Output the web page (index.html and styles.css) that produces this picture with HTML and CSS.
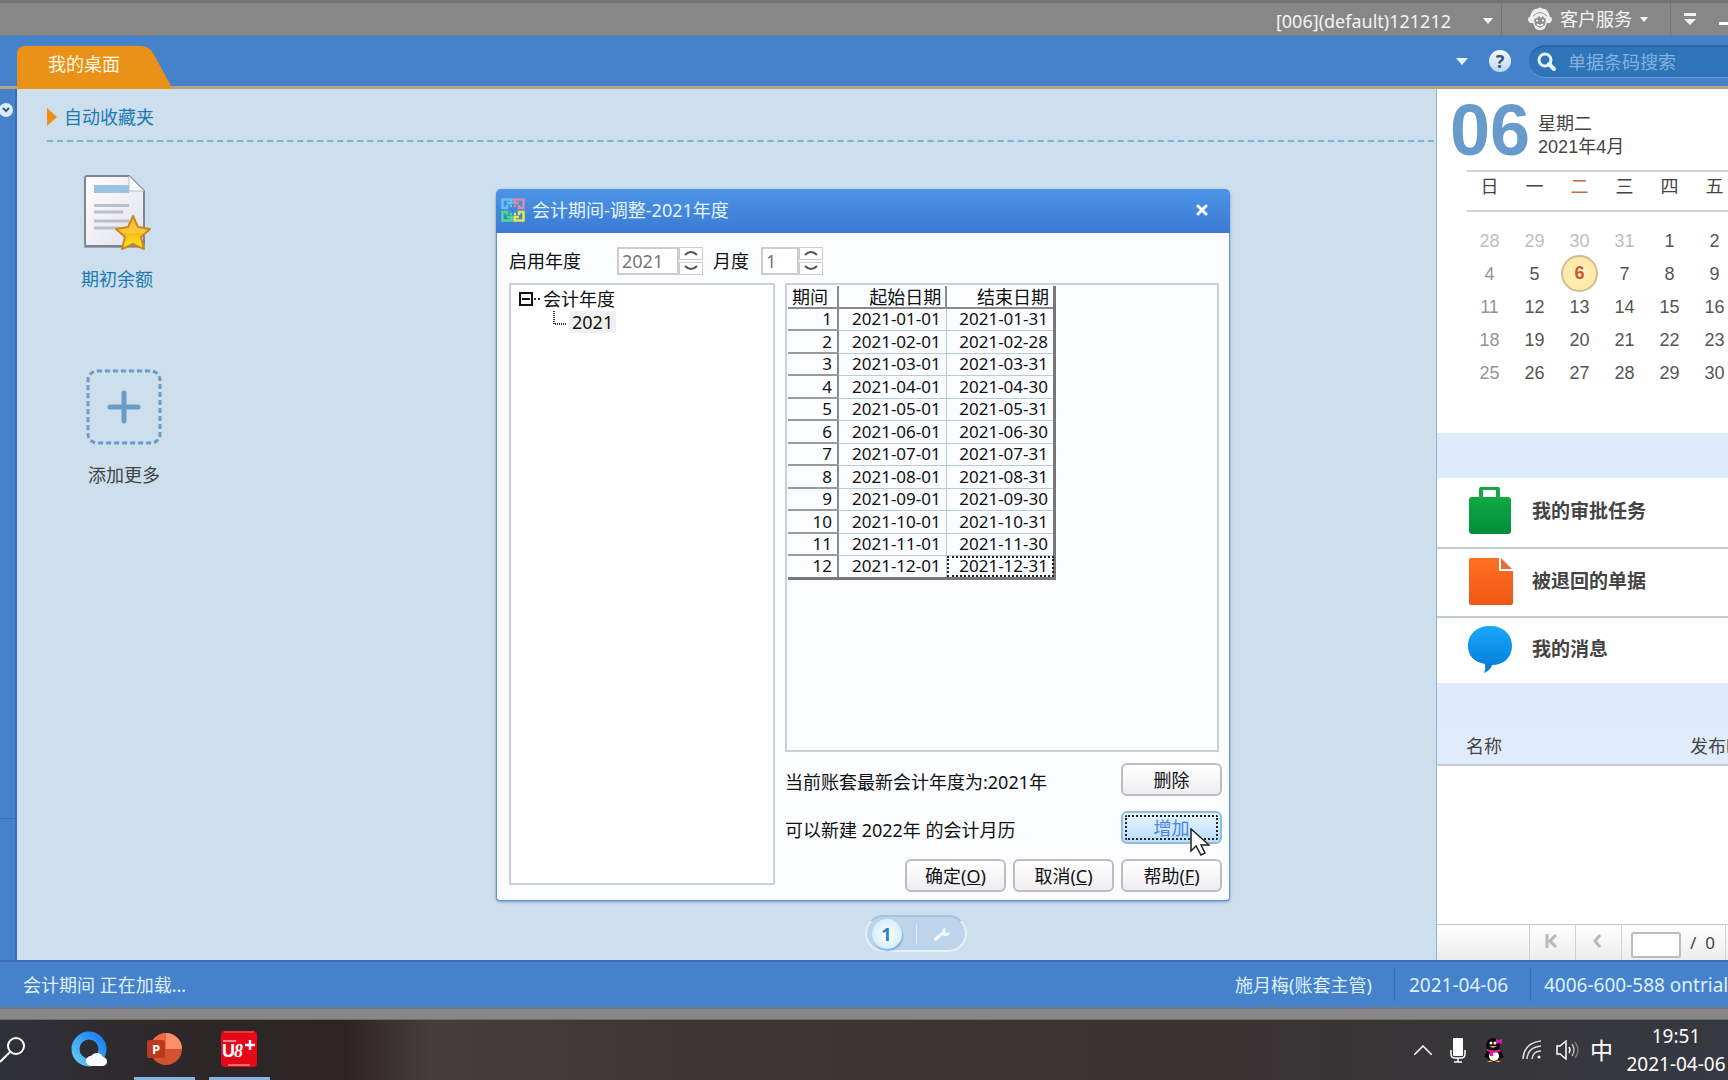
FILE: index.html
```html
<!DOCTYPE html>
<html lang="zh-CN">
<head>
<meta charset="utf-8">
<title>会计期间-调整</title>
<link rel="stylesheet" href="styles.css">
</head>
<body>
<div class="app">
  <header class="topbar">
    <button class="top-account">[006](default)121212 <svg width="10" height="6" viewBox="0 0 10 6"><path d="M0 0h10L5 6z" fill="#fff"/></svg></button>
    <button class="top-service">
      <svg width="24" height="24" viewBox="0 0 24 24"><path d="M2 16a4 4 0 0 1-1-6h1C3 4 7 1 9 2c2-2 4-2 6 0 3-1 6 3 7 8h1a4 4 0 0 1-1 6l-3 0-2 5c-3 3-7 3-10 0l-2-5z" fill="#ededed"/><path d="M6 12q3 0 5-3l2 2 2-2q1 3 3 3l-1 6-5 3-5-3z" fill="#909090"/><path d="M5 9q7-7 14 0" stroke="#9a9a9a" fill="none"/><path d="M8 13.500h2M14 13.500h2M9 17q3 3 6 0" stroke="#fff" stroke-width="1.500" fill="none"/></svg>
      客户服务 <svg width="8" height="5" viewBox="0 0 8 5"><path d="M0 0h8L4 5z" fill="#fff"/></svg>
    </button>
    <button class="top-menu" aria-label="菜单"><svg width="12" height="12" viewBox="0 0 12 12"><path d="M0 0h12v3H0zM0 6h12l-6 6z" fill="#f2f2f2"/></svg></button>
    <button class="top-min" aria-label="最小化"><svg width="12" height="12" viewBox="0 0 12 12"><path d="M0 9h12v3H0z" fill="#fff"/></svg></button>
  </header>

  <div class="navbar">
    <a class="tab" href="#desktop">
      <svg class="tab-shape" width="156" height="43" viewBox="0 0 156 43"><path d="M0 43V8Q0 0 8 0h115q9 0 13 7l17 31q2 5 3 5z" fill="#ea9118"/></svg>
      <span class="tab-text">我的桌面</span>
    </a>
    <div class="nav-tools">
      <button class="nav-caret" aria-label="展开"><svg width="12" height="7" viewBox="0 0 12 7"><path d="M0 0h12L6 7z" fill="#e8f3ff"/></svg></button>
      <button class="help" aria-label="帮助">?</button>
      <label class="search">
        <svg width="20" height="20" viewBox="0 0 20 20"><circle cx="8" cy="8" r="6" fill="none" stroke="#e6f2fd" stroke-width="3"/><path d="M12 12l5 5" stroke="#e6f2fd" stroke-width="4" stroke-linecap="round"/></svg>
        <input type="text" placeholder="单据条码搜索" aria-label="单据条码搜索">
      </label>
    </div>
  </div>

  <div class="workspace">
    <aside class="rail">
      <button class="rail-toggle" aria-label="展开侧栏"><svg width="14" height="14" viewBox="0 0 14 14"><circle cx="6" cy="7" r="7" fill="#d9ecfc"/><path d="M3 5l3 3 3-3" fill="none" stroke="#35587f" stroke-width="2"/></svg></button>
      <div class="rail-foot"></div>
    </aside>

    <main class="desktop" id="desktop">
      <h2 class="fav-title"><svg width="10" height="18" viewBox="0 0 10 18"><path d="M0 0l10 9-10 9z" fill="#f08e13"/></svg>自动收藏夹</h2>
      <a class="shortcut" href="#balance">
        <svg width="68" height="76" viewBox="0 0 68 76">
          <defs>
            <linearGradient id="paper" x2="1" y2="1"><stop stop-color="#fff"/><stop offset="1" stop-color="#dfe1ea"/></linearGradient>
            <linearGradient id="gold" x2="0" y2="1"><stop stop-color="#f7b53a"/><stop offset=".5" stop-color="#fcc93a"/><stop offset=".55" stop-color="#fbb912"/><stop offset="1" stop-color="#ffee2e"/></linearGradient>
          </defs>
          <path d="M1 71h61v2H1z" fill="#9da7b3"/>
          <path d="M2 3q0-2 2-2h42l15 15v53q0 2-2 2H4q-2 0-2-2z" fill="url(#paper)" stroke="#7c8493" stroke-width="2"/>
          <path d="M46 1v15h15z" fill="#f8f9fb" stroke="#b8bfc9"/>
          <path d="M11 10h35v8H11z" fill="#9bc2e0"/>
          <path d="M11 30.500h35M11 37h29M11 46h35M11 53h26" stroke="#b9bfcb" stroke-width="3"/>
          <path d="M50 41l5 11 12 2-9 8 3 12-11-5-11 5 3-12-9-8 12-2z" fill="url(#gold)" stroke="#c88a1c" stroke-width="2" stroke-linejoin="round"/>
        </svg>
        <span>期初余额</span>
      </a>
      <button class="add-more">
        <svg width="76" height="76" viewBox="0 0 76 76"><rect x="2" y="2" width="72" height="72" rx="9" fill="none" stroke="#6a9cca" stroke-width="3" stroke-dasharray="5 3"/><path d="M38 24v28M24 38h28" stroke="#6a9cca" stroke-width="5" stroke-linecap="round"/></svg>
        <span>添加更多</span>
      </button>
      <nav class="page-switch">
        <button class="page-current">1</button>
        <button class="page-setup" aria-label="设置"><svg width="16" height="14" viewBox="0 0 16 14"><path d="M1 12.500L9 6" stroke="#f0f7fd" stroke-width="3" stroke-linecap="round"/><path d="M12 1a4 4 0 1 0 4 4l-3 1-2-2z" fill="#f0f7fd"/></svg></button>
      </nav>
    </main>

    <aside class="side">
      <section class="calendar">
        <div class="today">
          <strong>06</strong>
          <p>星期二<br>2021年4月</p>
        </div>
        <table class="cal">
          <thead><tr><th>日</th><th>一</th><th class="now">二</th><th>三</th><th>四</th><th>五</th></tr></thead>
          <tbody>
            <tr class="prev"><td>28</td><td>29</td><td>30</td><td>31</td><td class="in">1</td><td class="in">2</td></tr>
            <tr><td>4</td><td>5</td><td><b class="mark">6</b></td><td>7</td><td>8</td><td>9</td></tr>
            <tr><td>11</td><td>12</td><td>13</td><td>14</td><td>15</td><td>16</td></tr>
            <tr><td>18</td><td>19</td><td>20</td><td>21</td><td>22</td><td>23</td></tr>
            <tr><td>25</td><td>26</td><td>27</td><td>28</td><td>29</td><td>30</td></tr>
          </tbody>
        </table>
      </section>
      <div class="band"></div>
      <ul class="links">
        <li><a href="#tasks"><svg width="46" height="48" viewBox="0 0 46 48"><defs><linearGradient id="gr" x2="0" y2="1"><stop stop-color="#0dab42"/><stop offset="1" stop-color="#038c3c"/></linearGradient></defs><path d="M14 10V3q0-2 2-2h13q2 0 2 2v7" fill="none" stroke="#12a844" stroke-width="4"/><rect x="2" y="10" width="42" height="37" rx="3" fill="url(#gr)"/></svg>我的审批任务</a></li>
        <li><a href="#returned"><svg width="46" height="48" viewBox="0 0 46 48"><defs><linearGradient id="or" x2="0" y2="1"><stop stop-color="#ff7021"/><stop offset="1" stop-color="#ee5715"/></linearGradient></defs><path d="M4 1h28v13h14v32q0 2-2 2H4q-2 0-2-2V3q0-2 2-2z" fill="url(#or)"/><path d="M34 1l11 11H34z" fill="#e2703a"/></svg>被退回的单据</a></li>
        <li><a href="#messages"><svg width="46" height="48" viewBox="0 0 46 48"><defs><linearGradient id="bl" x2="0" y2="1"><stop stop-color="#19a9fb"/><stop offset="1" stop-color="#0378d6"/></linearGradient></defs><path d="M23 1c13 0 22 8 22 20 0 11-8 19-20 19-1 4-4 6-8 8q2-4 1-9C7 37 1 31 1 21 1 9 10 1 23 1z" fill="url(#bl)"/></svg>我的消息</a></li>
      </ul>
      <div class="band"></div>
      <div class="list-head"><span>名称</span><span>发布时间</span></div>
      <div class="list-body"></div>
      <div class="pager">
        <button aria-label="首页"><svg width="12" height="14" viewBox="0 0 12 14"><path d="M2 0v14M11 1L5 7l6 6" fill="none" stroke="#b5babf" stroke-width="3"/></svg></button>
        <button aria-label="上一页"><svg width="8" height="14" viewBox="0 0 8 14"><path d="M7 1L2 7l5 6" fill="none" stroke="#b5babf" stroke-width="3"/></svg></button>
        <label><input type="text" aria-label="页码">/&nbsp; 0</label>
      </div>
    </aside>

    <section class="dialog" role="dialog" aria-label="会计期间-调整-2021年度">
      <header class="dlg-title">
        <svg width="24" height="24" viewBox="0 0 24 24" fill="none" stroke-width="2.500"><path d="M6 5h4.500V1.500h-9V10H6V7M11 8H9" stroke="#62c4f0"/><path d="M18 5h-4.500V1.500h9V10H18V7M13 8h2" stroke="#d98aa4"/><path d="M6 19h4.500v3.500h-9V14H6v3M11 16H9" stroke="#48dd85"/><path d="M18 19h-4.500v3.500h9V14H18v3M13 16h2" stroke="#e6e94a"/></svg>
        <h1>会计期间-调整-2021年度</h1>
        <button class="close" aria-label="关闭"><svg width="12" height="12" viewBox="0 0 12 12"><path d="M2 2l8 8M10 2l-8 8" stroke="#fff" stroke-width="3" stroke-linecap="round"/></svg></button>
      </header>
      <div class="dlg-form">
        <label for="year">启用年度</label>
        <div class="spin spin-year"><input id="year" type="text" value="2021"><div><button aria-label="增"><svg width="14" height="6" viewBox="0 0 14 6"><path d="M1 5q6-6 12 0" fill="none" stroke="#555" stroke-width="2"/></svg></button><button aria-label="减"><svg width="14" height="6" viewBox="0 0 14 6"><path d="M1 1q6 6 12 0" fill="none" stroke="#555" stroke-width="2"/></svg></button></div></div>
        <label for="month">月度</label>
        <div class="spin spin-month"><input id="month" type="text" value="1"><div><button aria-label="增"><svg width="14" height="6" viewBox="0 0 14 6"><path d="M1 5q6-6 12 0" fill="none" stroke="#555" stroke-width="2"/></svg></button><button aria-label="减"><svg width="14" height="6" viewBox="0 0 14 6"><path d="M1 1q6 6 12 0" fill="none" stroke="#555" stroke-width="2"/></svg></button></div></div>
      </div>
      <div class="dlg-body">
        <div class="tree">
          <div class="tree-root"><svg width="22" height="14" viewBox="0 0 22 14"><path d="M1 1h12v12H1zM3 7h8" fill="none" stroke="#111" stroke-width="2"/><path d="M15 7h7" stroke="#333" stroke-width="2" stroke-dasharray="2 2"/></svg>会计年度</div>
          <div class="tree-leaf"><svg width="14" height="24" viewBox="0 0 14 24"><path d="M1 0v13h13" fill="none" stroke="#333" stroke-width="2" stroke-dasharray="1 1"/></svg><span>2021</span></div>
        </div>
        <div class="detail">
          <div class="grid-box">
            <table class="periods">
              <thead><tr><th>期间</th><th>起始日期</th><th>结束日期</th></tr></thead>
              <tbody>
                <tr><td>1</td><td>2021-01-01</td><td>2021-01-31</td></tr>
                <tr><td>2</td><td>2021-02-01</td><td>2021-02-28</td></tr>
                <tr><td>3</td><td>2021-03-01</td><td>2021-03-31</td></tr>
                <tr><td>4</td><td>2021-04-01</td><td>2021-04-30</td></tr>
                <tr><td>5</td><td>2021-05-01</td><td>2021-05-31</td></tr>
                <tr><td>6</td><td>2021-06-01</td><td>2021-06-30</td></tr>
                <tr><td>7</td><td>2021-07-01</td><td>2021-07-31</td></tr>
                <tr><td>8</td><td>2021-08-01</td><td>2021-08-31</td></tr>
                <tr><td>9</td><td>2021-09-01</td><td>2021-09-30</td></tr>
                <tr><td>10</td><td>2021-10-01</td><td>2021-10-31</td></tr>
                <tr><td>11</td><td>2021-11-01</td><td>2021-11-30</td></tr>
                <tr><td>12</td><td>2021-12-01</td><td class="focus">2021-12-31</td></tr>
              </tbody>
            </table>
          </div>
          <div class="act"><p>当前账套最新会计年度为:2021年</p><button class="btn">删除</button></div>
          <div class="act"><p>可以新建 2022年 的会计月历</p><button class="btn btn-hot">增加</button></div>
          <div class="act act-end"><button class="btn">确定(<u>O</u>)</button><button class="btn">取消(<u>C</u>)</button><button class="btn">帮助(<u>F</u>)</button></div>
        </div>
      </div>
      <svg class="cursor" width="20" height="28" viewBox="0 0 20 28"><path d="M1 1v22l5-5 5 9 4-2-4-8h8z" fill="#fff" stroke="#222" stroke-width="1.500"/></svg>
    </section>
  </div>

  <footer class="status">
    <span class="status-msg">会计期间 正在加载...</span>
    <span class="status-user">施月梅(账套主管)</span>
    <span class="status-date">2021-04-06</span>
    <span class="status-tel">4006-600-588 ontrial</span>
  </footer>
  <div class="frame-edge"></div>

  <div class="taskbar">
    <div class="apps">
      <button class="app-find" aria-label="搜索"><svg width="26" height="28" viewBox="0 0 26 28"><circle cx="16" cy="10" r="8" fill="none" stroke="#fff" stroke-width="2"/><path d="M10 16L0 26" stroke="#fff" stroke-width="2"/></svg></button>
      <button class="app-btn" aria-label="浏览器"><svg width="36" height="36" viewBox="0 0 36 36"><defs><linearGradient id="q" x1="0" y1="1" x2="1" y2="0"><stop stop-color="#63c7f7"/><stop offset="1" stop-color="#167df0"/></linearGradient></defs><circle cx="18" cy="18" r="13.500" fill="none" stroke="url(#q)" stroke-width="8"/><path d="M20 35a5 5 0 0 1 0-10 7 7 0 0 1 12 1 4.500 4.500 0 0 1-1 9z" fill="#fff"/></svg></button>
      <button class="app-btn open" aria-label="演示文稿"><svg width="36" height="36" viewBox="0 0 36 36"><circle cx="20" cy="18" r="16" fill="#d35230"/><path d="M20 2a16 16 0 0 1 16 16H20z" fill="#ff8f6b"/><path d="M20 2A16 16 0 0 0 4 18h16z" fill="#ed6c47"/><rect x="1" y="9" width="18" height="18" rx="2" fill="#b93b1d"/><text x="6" y="23" font-family="Open Sans, sans-serif" font-weight="700" font-size="13" fill="#fff">P</text></svg></button>
      <button class="app-btn open" aria-label="U8+"><svg width="36" height="36" viewBox="0 0 36 36"><rect width="36" height="36" rx="4" fill="#e60817"/><path d="M3 1h30" stroke="#f06a6a"/><path d="M7 34h22" stroke="#f06a6a" stroke-width="2"/><path d="M2 10h13" stroke="#fff"/><text x="1" y="26" font-family="Liberation Sans, sans-serif" font-weight="700" font-size="18" fill="#fff">U</text><text x="13" y="26" font-family="Liberation Serif, serif" font-style="italic" font-weight="700" font-size="18" fill="#fff">8</text><path d="M29 9v10M24 14h10" stroke="#fff" stroke-width="2.500"/></svg></button>
    </div>
    <div class="tray">
      <svg width="18" height="10" viewBox="0 0 18 10"><path d="M0 10l9-9 9 9" fill="none" stroke="#fff" stroke-width="1.500"/></svg>
      <svg width="16" height="26" viewBox="0 0 16 26"><rect x="3" y="1" width="10" height="18" rx="1" fill="#fff"/><path d="M1 13v4q0 4 4 4h6q4 0 4-4v-4M8 21v4M4 25h8" fill="none" stroke="#fff" stroke-width="1.500"/></svg>
      <svg width="20" height="25" viewBox="0 0 20 25"><ellipse cx="10" cy="16" rx="8" ry="8" fill="#0b0b0f"/><ellipse cx="9" cy="7" rx="7" ry="7" fill="#0b0b0f"/><path d="M3 13l-3 6 3 1zM17 13l3 6-3 1z" fill="#0b0b0f"/><ellipse cx="10" cy="18" rx="5" ry="5" fill="#fff"/><circle cx="7" cy="5" r="1.500" fill="#fff"/><circle cx="11" cy="5" r="1.500" fill="#fff"/><path d="M5 8h8l-4 2z" fill="#f3a91c"/><path d="M3 11q7 3 13 0l1 2q-4 2-8 2v3H6v-4l-3-1z" fill="#ec1aa4"/><path d="M12 1l3 1 3-1v5l-3-1-3 1z" fill="#d61ab0"/><path d="M3 24q3-3 6 0zM11 24q3-3 6 0z" fill="#f3a91c"/></svg>
      <svg width="20" height="20" viewBox="0 0 20 20" fill="none" stroke="#ddd" stroke-width="1.500"><path d="M1 19Q2 3 19 1M5 19Q6 7 19 6M10 19q1-8 9-8"/><circle cx="17" cy="17" r="1.500" fill="#fff" stroke="none"/></svg>
      <svg class="volume" width="23" height="20" viewBox="0 0 23 20" fill="none" stroke="#fff" stroke-width="1.500"><path d="M1 6h3l6-5v18l-6-5H1z"/><path d="M13 7q2 3 0 6"/><path d="M16 4q4 6 0 12" stroke="#bbb"/><path d="M19 2q6 8 0 16" stroke="#777"/></svg>
      <span class="ime">中</span>
      <time class="clock">19:51<br>2021-04-06</time>
    </div>
  </div>
</div>
</body>
</html>
```
FILE: styles.css
```css
* { box-sizing: border-box; }
body {
  margin: 0;
  font: 18px/24px "Noto Sans", "Noto Sans CJK SC", sans-serif;
  color: #111;
}
h1, h2, p, ul { margin: 0; padding: 0; font-size: 18px; font-weight: 400; }
ul { list-style: none; }
a { color: inherit; text-decoration: none; }
button { margin: 0; padding: 0; border: 0; background: none; font: inherit; color: inherit; }
input { font: inherit; min-width: 0; }
svg { display: block; flex: none; }
table { border-collapse: collapse; }

.app { display: flex; flex-direction: column; height: 100vh; overflow: hidden; background: #4681cb; }

/* window caption */
.topbar {
  display: flex; justify-content: flex-end; flex: none; height: 36px;
  background: #878787; border-top: 3px solid #737373; border-bottom: 1px solid #6680a0;
  color: #f4f4f4;
}
.topbar button { display: flex; align-items: center; }
.top-account { gap: 32px; padding: 4px 8px 0 0; }
.top-service { gap: 8px; width: 169px; padding-left: 26px; border-left: 1px solid #737373; }
.top-menu { width: 49px; padding-left: 13px; border-left: 1px solid #737373; }
.top-min { width: 9px; overflow: hidden; }

/* tab strip */
.navbar { display: flex; justify-content: space-between; flex: none; height: 53px; padding-left: 17px; border-bottom: 3px solid #b5a184; }
.tab { display: grid; align-self: flex-end; margin-bottom: -3px; color: #fff8e6; }
.tab-shape, .tab-text { grid-area: 1 / 1; }
.tab-text { padding: 6px 0 0 31px; }
.nav-tools { display: flex; align-items: center; }
.help {
  width: 22px; height: 22px; margin: 0 18px 0 21px; border-radius: 50%;
  background: linear-gradient(#f2f8ff, #bcd8f5); color: #3b5573; font-weight: 700; line-height: 22px; text-align: center;
}
.search {
  display: flex; align-items: center; gap: 11px; width: 199px; height: 33px; padding-left: 8px;
  background: #2f74b8; border-radius: 17px 0 0 17px; border-top: 2px solid #2a63a2; border-bottom: 1px solid #6aa0dc;
}
.search input { flex: 1; border: 0; padding: 0; background: none; color: #fff; outline: none; }
.search input::placeholder { color: #83b1e0; opacity: 1; }

/* work area */
.workspace { display: flex; flex: 1; min-height: 0; position: relative; }
.rail { display: flex; flex-direction: column; width: 17px; flex: none; padding-top: 14px; border-right: 2px solid #3a6db3; }
.rail-foot { height: 142px; margin-top: auto; border-top: 1px solid #3a6db3; }
.desktop {
  flex: 1; min-width: 0; display: flex; flex-direction: column; align-items: flex-start;
  padding: 16px 2px 8px 30px; background: #cddeed;
}
.fav-title {
  display: flex; align-items: center; gap: 7px; align-self: stretch; height: 37px; padding-bottom: 11px;
  color: #1c7ab2; border-bottom: 2px dashed #7fb3d3;
}
.shortcut, .add-more { display: flex; flex-direction: column; align-items: center; width: 76px; }
.shortcut { gap: 16px; margin: 33px 0 0 32px; color: #1c7ab2; }
.add-more { gap: 18px; margin: 78px 0 0 39px; color: #444; }
.page-switch {
  display: flex; align-items: center; align-self: center; width: 102px; height: 37px; margin: auto 0 0 350px; padding: 0 5px;
  border: 2px solid #e4f0fa; border-top-color: #a9c3df; border-radius: 19px; background: #bdd4ea;
}
.page-current {
  width: 30px; height: 30px; border-radius: 50%; background: radial-gradient(#fff, #c4e5fb);
  box-shadow: 1px 2px 2px #79b0e0; color: #2784bd; font-weight: 700; line-height: 30px;
}
.page-setup { display: flex; margin-left: 14px; padding: 3px 0 3px 17px; border-left: 1px solid #dfedf8; }

/* right column */
.side {
  display: flex; flex-direction: column; flex: none; width: 292px; overflow: hidden;
  background: #fff; border-left: 1px solid #8fb3d6; color: #444;
}
.calendar { height: 344px; flex: none; }
.today { display: flex; gap: 8px; height: 81px; padding: 13px 0 0 13px; }
.today strong { font: 700 72px/56px "Liberation Sans", sans-serif; color: #669bcc; }
.today p { padding-top: 11px; line-height: 23px; font-family: "Liberation Sans", "Noto Sans CJK SC", sans-serif; }
.cal { width: 270px; margin-left: 30px; table-layout: fixed; text-align: center; font-family: "Liberation Sans", "Noto Sans CJK SC", sans-serif; }
.cal th { height: 40px; padding: 0 0 8px; font-weight: 400; border-top: 2px solid #cfd4d9; border-bottom: 2px solid #cfd4d9; }
.cal th.now { color: #c96a46; }
.cal tbody::before { content: ""; display: block; height: 12px; }
.cal td { height: 33px; padding: 0; color: #555; }
.cal td:first-child { color: #949494; }
.cal .prev td { color: #bdbdbd; }
.cal .prev td.in { color: #555; }
.mark {
  display: block; width: 37px; height: 37px; margin: -2px auto; border: 2px solid #d3bd92; border-radius: 50%;
  background: radial-gradient(#fff2c0, #ffe59c); color: #c65a33; line-height: 33px;
}
.band { flex: none; height: 45px; background: #ddebfd; }
.links li { height: 69px; border-bottom: 2px solid #c3cbd3; }
.links li:first-child { height: 71px; }
.links li:last-child { height: 65px; border: 0; }
.links a { display: flex; align-items: center; gap: 19px; height: 100%; padding: 0 0 3px 30px; font-size: 19px; font-weight: 700; color: #444; }
.list-head {
  display: flex; gap: 188px; flex: none; height: 38px; padding: 6px 0 0 29px; white-space: nowrap;
  background: #e0ecfb; border-bottom: 2px solid #c3cbd3;
}
.list-body { flex: 1; }
.pager { display: flex; flex: none; height: 36px; padding-left: 92px; border-top: 1px solid #c4c8cc; background: linear-gradient(#fff, #ececec); }
.pager button { display: flex; align-items: center; justify-content: center; width: 46px; padding: 0 4px 4px 0; border-left: 1px solid #d0d0d0; }
.pager label { display: flex; align-items: center; gap: 9px; width: 105px; padding-left: 9px; border: solid #d0d0d0; border-width: 0 1px; font-size: 17px; white-space: nowrap; }
.pager input { width: 50px; height: 26px; margin-top: 4px; padding: 0; border: 2px solid #b9bcc0; border-radius: 3px; background: #fff; }

/* period dialog */
.dialog {
  position: absolute; left: 496px; top: 100px; width: 734px; height: 712px;
  display: flex; flex-direction: column; background: #fbfcff;
  border: 1px solid #5f93d8; border-top: 0; border-radius: 6px 6px 4px 4px; box-shadow: 0 1px 3px #7c98bd;
}
.dlg-title {
  display: flex; align-items: center; gap: 7px; flex: none; height: 44px; padding: 0 18px 2px 5px; margin: 0 -1px;
  background: linear-gradient(#4c94e8, #3b7ad2); border-radius: 5px 5px 0 0; color: #e2f5ff;
}
.close { margin-left: auto; padding: 4px; }
.dlg-form { display: flex; align-items: center; flex: none; height: 50px; padding: 5px 0 0 12px; }
.dlg-form label[for="year"] { width: 108px; }
.dlg-form label[for="month"] { width: 48px; margin-left: 10px; }
.spin { display: flex; height: 28px; }
.spin-year { width: 86px; }
.spin-month { width: 62px; }
.spin input { flex: 1; width: 0; padding: 0 3px; border: 2px solid #ccc; background: #fff; color: #777; }
.spin div { display: flex; flex-direction: column; justify-content: space-between; width: 24px; }
.spin button { display: flex; align-items: center; justify-content: center; height: 13px; border: 1px solid #ccc; background: #fff; }
.dlg-body { display: flex; gap: 10px; flex: 1; min-height: 0; padding: 0 7px 8px 12px; }
.tree { width: 266px; margin-bottom: 7px; padding: 2px 8px; border: 2px solid #ccd0d4; background: #fff; }
.tree-root { display: flex; align-items: center; gap: 2px; }
.tree-leaf { display: flex; gap: 2px; padding-left: 34px; line-height: 22px; }
.tree-leaf span { height: 22px; padding: 0 3px; background: #efefef; }
.detail { flex: 1; display: flex; flex-direction: column; gap: 15px; }
.grid-box { flex: 1; margin: 0 3px -4px 0; padding: 1px; border: 2px solid #ccd0d4; }
.periods {
  width: 268px; table-layout: fixed; border-right: 3px solid #777; border-bottom: 3px solid #777;
  font: 17px/20px "Noto Sans", "Noto Sans CJK SC", sans-serif; text-align: right;
}
.periods th { height: 22px; padding: 0 4px; font-size: 18px; font-weight: 400; border-right: 2px solid #8a8a8a; border-bottom: 2px solid #8a8a8a; white-space: nowrap; }
.periods th:first-child { width: 50px; text-align: left; }
.periods td { height: 22px; padding: 0 5px; border-right: 1px solid #b9cad8; border-bottom: 1px solid #b9cad8; }
.periods tr:nth-child(even) td { height: 23px; }
.periods td:first-child { border-right: 2px solid #8a8a8a; border-bottom: 2px solid #9a9a9a; }
.periods th:last-child, .periods td:last-child { border-right: 3px solid #777; }
.periods tr:last-child td { border-bottom: 3px solid #777; }
.periods .focus { outline: 2px dotted #222; outline-offset: -3px; }
.act { display: flex; align-items: center; justify-content: space-between; flex: none; height: 33px; }
.act p { padding-top: 4px; }
.act-end { justify-content: flex-end; gap: 7px; }
.btn { width: 101px; height: 33px; border: 2px solid #bdbdbd; border-radius: 6px; background: linear-gradient(#fff, #efedf0); line-height: 28px; }
.btn-hot {
  border-color: #92bdd8; background: linear-gradient(#e6f5ff, #b9dcfa); color: #4b83dc;
  outline: 2px dotted #222; outline-offset: -6px;
}
.cursor { position: absolute; right: 19px; top: 639px; }

/* status bar */
.status { display: flex; flex: none; height: 47px; padding-left: 23px; border-top: 2px solid #3a6db3; color: #ddf0ff; align-items: center; font-size: 18px; }
.status-msg { flex: 1; }
.status-user { width: 159px; }
.status-date { width: 136px; padding-left: 14px; border-left: 1px solid #3a6db3; font-size: 19px; line-height: 32px; }
.status-tel { width: 198px; padding-left: 13px; border-left: 1px solid #3a6db3; font-size: 19px; line-height: 32px; white-space: nowrap; }
.frame-edge { flex: none; height: 13px; background: #878787; border-top: 2px solid #747a84; border-bottom: 1px solid #6e6c6b; }

/* taskbar */
.taskbar { display: flex; justify-content: space-between; flex: none; height: 60px; background: linear-gradient(90deg, #303138, #2d2627 12%, #2d2524 20%, #443f3e 25%, #3c3637 40%, #3a3334 70%, #373639 85%, #363941); color: #fff; }
.apps { display: flex; gap: 14px; }
.app-find { display: flex; align-items: center; width: 45px; }
.app-btn { display: flex; align-items: center; justify-content: center; width: 61px; padding-right: 2px; border-bottom: 3px solid transparent; }
.app-btn.open { border-color: #86b5dd; }
.tray { display: flex; align-items: center; gap: 18px; }
.volume { margin-left: -4px; }
.ime { margin-left: -7px; font-size: 23px; }
.clock { width: 104px; font-size: 19px; line-height: 28px; text-align: center; white-space: nowrap; margin-left: -7px; }
```
